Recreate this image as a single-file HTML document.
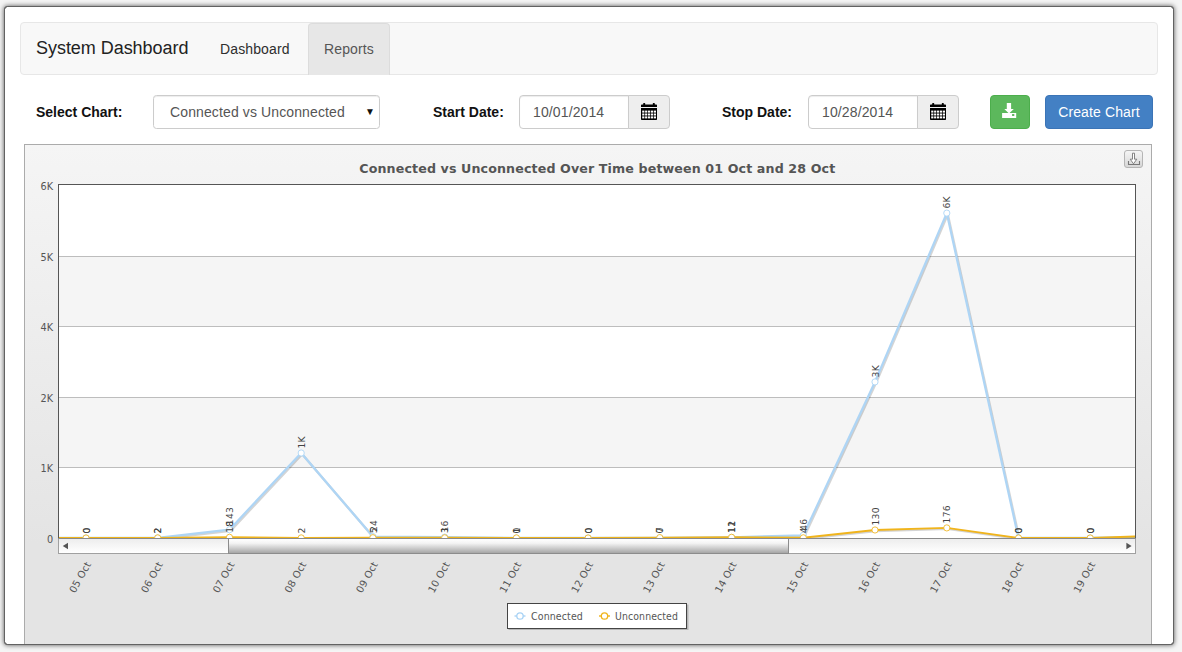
<!DOCTYPE html>
<html lang="en">
<head>
<meta charset="utf-8">
<title>System Dashboard</title>
<style>
html,body{margin:0;padding:0;}
body{width:1182px;height:652px;overflow:hidden;background:#f5f5f5;font-family:"Liberation Sans",Arial,Helvetica,sans-serif;font-size:14px;color:#333;position:relative;letter-spacing:.12px;}
.win{position:absolute;left:4px;top:6px;width:1168px;height:637px;border:1px solid #626262;border-radius:3.5px;background:#fff;box-shadow:0 0 5px 0 rgba(0,0,0,.68);overflow:hidden;}
.abs{position:absolute;white-space:nowrap;}
.navbar{left:20px;top:22px;width:1136px;height:51px;border:1px solid #e7e7e7;border-radius:4px;background:#f8f8f8;}
.brand{left:36px;top:38px;font-size:18px;letter-spacing:-.04px;line-height:20px;color:#222;}
.nav1{left:220px;top:39px;line-height:20px;color:#2e2e2e;}
.tab{left:308px;top:23px;width:80px;height:51px;border:1px solid #dcdcdc;border-bottom:none;border-radius:4px 4px 0 0;background:#e7e7e7;}
.nav2{left:324px;top:39px;line-height:20px;color:#555;}
.lbl{font-weight:bold;letter-spacing:0;line-height:20px;top:102px;color:#111;}
.ctl{top:95px;height:32px;border:1px solid #ccc;border-radius:3.5px;background:#fff;box-shadow:inset 0 1px 1px rgba(0,0,0,.075);color:#555;line-height:32px;}
.ctl.in{border-radius:4px 0 0 4px;}
.addon{top:95px;height:32px;width:40px;border:1px solid #ccc;border-radius:0 4px 4px 0;background:#eee;}
.cal{position:absolute;left:12px;top:7px;}
.btn{top:95px;height:32px;border-radius:4px;color:#fff;line-height:32px;text-align:center;}
.g{left:990px;width:38px;background:#5cb85c;border:1px solid #4cae4c;}
.b{left:1045px;width:106px;background:#4380c4;border:1px solid #3b74b6;}
.chartbox{left:24px;top:144px;width:1126px;height:499px;border:1px solid #ababab;border-bottom:none;overflow:hidden;background:linear-gradient(#f5f5f5,#e4e4e4 400px,#e4e4e4);}
.chart{position:absolute;left:0;top:0;font-family:"DejaVu Sans",Verdana,sans-serif;}
.chart .ax{font-size:9.7px;fill:#555;}
.chart .vl{font-size:9.2px;letter-spacing:.25px;fill:#444;}
.chart .title{font-size:13px;font-weight:bold;fill:#555;}
</style>
</head>
<body>
<div class="win"></div>
<div class="abs navbar"></div>
<div class="abs brand">System Dashboard</div>
<div class="abs nav1">Dashboard</div>
<div class="abs tab"></div>
<div class="abs nav2">Reports</div>

<div class="abs lbl" style="left:36px">Select Chart:</div>
<div class="abs ctl" style="left:153px;width:225px;"><span class="abs" style="left:16px;top:0">Connected vs Unconnected</span><span class="abs" style="left:211px;top:0;font-size:10px;color:#111">&#9660;</span></div>
<div class="abs lbl" style="left:433px">Start Date:</div>
<div class="abs ctl in" style="left:519px;width:108px;"><span class="abs" style="left:13px;top:0">10/01/2014</span></div>
<div class="abs addon" style="left:628px"><svg class="cal" width="16" height="17" viewBox="0 0 16 17"><path fill="#000" d="M0 2.3 Q0 1.5 .8 1.5 H2.2 V.6 Q2.2 0 2.8 0 H3.6 Q4.2 0 4.2 .6 V1.5 H11.8 V.6 Q11.8 0 12.4 0 H13.2 Q13.8 0 13.8 .6 V1.5 H15.2 Q16 1.5 16 2.3 V4 H0 Z"/><path fill="#000" d="M0 5 H16 V16.2 Q16 17 15.2 17 H.8 Q0 17 0 16.2 Z"/><g fill="#fff"><rect x="1.2" y="7.6" width="2.2" height="2"/><rect x="4.1" y="7.6" width="2.2" height="2"/><rect x="7" y="7.6" width="2.2" height="2"/><rect x="9.9" y="7.6" width="2.2" height="2"/><rect x="12.8" y="7.6" width="2.2" height="2"/><rect x="1.2" y="10.5" width="2.2" height="2"/><rect x="4.1" y="10.5" width="2.2" height="2"/><rect x="7" y="10.5" width="2.2" height="2"/><rect x="9.9" y="10.5" width="2.2" height="2"/><rect x="12.8" y="10.5" width="2.2" height="2"/><rect x="1.2" y="13.4" width="2.2" height="2"/><rect x="4.1" y="13.4" width="2.2" height="2"/><rect x="7" y="13.4" width="2.2" height="2"/><rect x="9.9" y="13.4" width="2.2" height="2"/><rect x="12.8" y="13.4" width="2.2" height="2"/></g></svg></div>
<div class="abs lbl" style="left:722px">Stop Date:</div>
<div class="abs ctl in" style="left:808px;width:108px;"><span class="abs" style="left:13px;top:0">10/28/2014</span></div>
<div class="abs addon" style="left:917px"><svg class="cal" width="16" height="17" viewBox="0 0 16 17"><path fill="#000" d="M0 2.3 Q0 1.5 .8 1.5 H2.2 V.6 Q2.2 0 2.8 0 H3.6 Q4.2 0 4.2 .6 V1.5 H11.8 V.6 Q11.8 0 12.4 0 H13.2 Q13.8 0 13.8 .6 V1.5 H15.2 Q16 1.5 16 2.3 V4 H0 Z"/><path fill="#000" d="M0 5 H16 V16.2 Q16 17 15.2 17 H.8 Q0 17 0 16.2 Z"/><g fill="#fff"><rect x="1.2" y="7.6" width="2.2" height="2"/><rect x="4.1" y="7.6" width="2.2" height="2"/><rect x="7" y="7.6" width="2.2" height="2"/><rect x="9.9" y="7.6" width="2.2" height="2"/><rect x="12.8" y="7.6" width="2.2" height="2"/><rect x="1.2" y="10.5" width="2.2" height="2"/><rect x="4.1" y="10.5" width="2.2" height="2"/><rect x="7" y="10.5" width="2.2" height="2"/><rect x="9.9" y="10.5" width="2.2" height="2"/><rect x="12.8" y="10.5" width="2.2" height="2"/><rect x="1.2" y="13.4" width="2.2" height="2"/><rect x="4.1" y="13.4" width="2.2" height="2"/><rect x="7" y="13.4" width="2.2" height="2"/><rect x="9.9" y="13.4" width="2.2" height="2"/><rect x="12.8" y="13.4" width="2.2" height="2"/></g></svg></div>
<div class="abs btn g"><svg width="38" height="32" viewBox="0 0 38 32" style="position:absolute;left:0;top:0"><path fill="#fff" d="M15.8 7.1 H20.1 V13.1 H22.8 L18 17.5 L13.3 13.1 H15.8 Z"/><path fill="#fff" fill-rule="evenodd" d="M11.1 17.1 H25.2 V21.9 H11.1 Z M21.1 18.1 V20 H23.3 V18.1 Z"/></svg></div>
<div class="abs btn b">Create Chart</div>

<div class="abs chartbox">
<svg class="chart" width="1126" height="520" viewBox="0 0 1126 520">
<defs><clipPath id="plotclip"><rect x="34" y="40" width="1076" height="353"/></clipPath><linearGradient id="thumbg" x1="0" y1="0" x2="0" y2="1"><stop offset="0" stop-color="#ffffff"/><stop offset="0.3" stop-color="#f4f4f4"/><stop offset="1" stop-color="#a6a6a6"/></linearGradient><linearGradient id="trackg" x1="0" y1="0" x2="0" y2="1"><stop offset="0" stop-color="#ececec"/><stop offset="1" stop-color="#ffffff"/></linearGradient><linearGradient id="expg" x1="0" y1="0" x2="0" y2="1"><stop offset="0" stop-color="#f6f6f6"/><stop offset="1" stop-color="#d6d6d6"/></linearGradient></defs>
<rect x="34" y="40" width="1076" height="353" fill="#ffffff"/>
<rect x="34" y="112" width="1076" height="69" fill="#f5f5f5"/>
<rect x="34" y="253" width="1076" height="69" fill="#f5f5f5"/>
<rect x="34" y="111" width="1076" height="1" fill="#bdbdbd"/>
<rect x="34" y="181" width="1076" height="1" fill="#bdbdbd"/>
<rect x="34" y="252" width="1076" height="1" fill="#bdbdbd"/>
<rect x="34" y="322" width="1076" height="1" fill="#bdbdbd"/>
<text x="28.3" y="45.0" text-anchor="end" class="ax">6K</text>
<text x="28.3" y="116.0" text-anchor="end" class="ax">5K</text>
<text x="28.3" y="186.0" text-anchor="end" class="ax">4K</text>
<text x="28.3" y="257.0" text-anchor="end" class="ax">2K</text>
<text x="28.3" y="327.0" text-anchor="end" class="ax">1K</text>
<text x="28.3" y="398.0" text-anchor="end" class="ax">0</text>
<text x="572.3" y="28.0" text-anchor="middle" textLength="476" lengthAdjust="spacingAndGlyphs" class="title">Connected vs Unconnected Over Time between 01 Oct and 28 Oct</text>
<g clip-path="url(#plotclip)">
<polyline points="-9.7,394.2 62.0,394.2 133.7,394.1 205.5,385.9 277.2,309.2 348.9,392.8 420.7,393.3 492.4,394.2 564.1,394.2 635.8,394.2 707.6,393.6 779.3,391.5 851.0,238.1 922.8,69.3 994.5,394.2 1066.2,394.2 1138.0,393.0" fill="none" stroke="#000" stroke-opacity="0.17" stroke-width="2.3" stroke-linejoin="round"/>
<polyline points="-10.7,393.0 61.0,393.0 132.7,392.9 204.5,384.7 276.2,308.0 347.9,391.6 419.7,392.1 491.4,393.0 563.1,393.0 634.8,393.0 706.6,392.4 778.3,390.3 850.0,236.9 921.8,68.1 993.5,393.0 1065.2,393.0 1137.0,391.8" fill="none" stroke="#aed5f5" stroke-width="2.3" stroke-linejoin="round"/>
<polyline points="-9.7,394.2 62.0,394.2 133.7,394.1 205.5,393.5 277.2,394.1 348.9,393.9 420.7,394.0 492.4,394.1 564.1,394.2 635.8,393.8 707.6,393.5 779.3,394.0 851.0,386.2 922.8,384.1 994.5,394.2 1066.2,394.2 1138.0,391.9" fill="none" stroke="#000" stroke-opacity="0.17" stroke-width="1.9" stroke-linejoin="round"/>
<polyline points="-10.7,393.0 61.0,393.0 132.7,392.9 204.5,392.3 276.2,392.9 347.9,392.7 419.7,392.8 491.4,392.9 563.1,393.0 634.8,392.6 706.6,392.3 778.3,392.8 850.0,385.0 921.8,382.9 993.5,393.0 1065.2,393.0 1137.0,390.7" fill="none" stroke="#f0b41c" stroke-width="1.9" stroke-linejoin="round"/>
<circle cx="-10.7" cy="393.0" r="3.1" fill="#fff" stroke="#a9d3f5" stroke-width="1" stroke-opacity="0.85"/>
<circle cx="61.0" cy="393.0" r="3.1" fill="#fff" stroke="#a9d3f5" stroke-width="1" stroke-opacity="0.85"/>
<circle cx="132.7" cy="392.9" r="3.1" fill="#fff" stroke="#a9d3f5" stroke-width="1" stroke-opacity="0.85"/>
<circle cx="204.5" cy="384.7" r="3.1" fill="#fff" stroke="#a9d3f5" stroke-width="1" stroke-opacity="0.85"/>
<circle cx="276.2" cy="308.0" r="3.1" fill="#fff" stroke="#a9d3f5" stroke-width="1" stroke-opacity="0.85"/>
<circle cx="347.9" cy="391.6" r="3.1" fill="#fff" stroke="#a9d3f5" stroke-width="1" stroke-opacity="0.85"/>
<circle cx="419.7" cy="392.1" r="3.1" fill="#fff" stroke="#a9d3f5" stroke-width="1" stroke-opacity="0.85"/>
<circle cx="491.4" cy="393.0" r="3.1" fill="#fff" stroke="#a9d3f5" stroke-width="1" stroke-opacity="0.85"/>
<circle cx="563.1" cy="393.0" r="3.1" fill="#fff" stroke="#a9d3f5" stroke-width="1" stroke-opacity="0.85"/>
<circle cx="634.8" cy="393.0" r="3.1" fill="#fff" stroke="#a9d3f5" stroke-width="1" stroke-opacity="0.85"/>
<circle cx="706.6" cy="392.4" r="3.1" fill="#fff" stroke="#a9d3f5" stroke-width="1" stroke-opacity="0.85"/>
<circle cx="778.3" cy="390.3" r="3.1" fill="#fff" stroke="#a9d3f5" stroke-width="1" stroke-opacity="0.85"/>
<circle cx="850.0" cy="236.9" r="3.1" fill="#fff" stroke="#a9d3f5" stroke-width="1" stroke-opacity="0.85"/>
<circle cx="921.8" cy="68.1" r="3.1" fill="#fff" stroke="#a9d3f5" stroke-width="1" stroke-opacity="0.85"/>
<circle cx="993.5" cy="393.0" r="3.1" fill="#fff" stroke="#a9d3f5" stroke-width="1" stroke-opacity="0.85"/>
<circle cx="1065.2" cy="393.0" r="3.1" fill="#fff" stroke="#a9d3f5" stroke-width="1" stroke-opacity="0.85"/>
<circle cx="1137.0" cy="391.8" r="3.1" fill="#fff" stroke="#a9d3f5" stroke-width="1" stroke-opacity="0.85"/>
<circle cx="-10.7" cy="393.0" r="3.1" fill="#fff" stroke="#f0b41c" stroke-width="1" stroke-opacity="0.85"/>
<circle cx="61.0" cy="393.0" r="3.1" fill="#fff" stroke="#f0b41c" stroke-width="1" stroke-opacity="0.85"/>
<circle cx="132.7" cy="392.9" r="3.1" fill="#fff" stroke="#f0b41c" stroke-width="1" stroke-opacity="0.85"/>
<circle cx="204.5" cy="392.3" r="3.1" fill="#fff" stroke="#f0b41c" stroke-width="1" stroke-opacity="0.85"/>
<circle cx="276.2" cy="392.9" r="3.1" fill="#fff" stroke="#f0b41c" stroke-width="1" stroke-opacity="0.85"/>
<circle cx="347.9" cy="392.7" r="3.1" fill="#fff" stroke="#f0b41c" stroke-width="1" stroke-opacity="0.85"/>
<circle cx="419.7" cy="392.8" r="3.1" fill="#fff" stroke="#f0b41c" stroke-width="1" stroke-opacity="0.85"/>
<circle cx="491.4" cy="392.9" r="3.1" fill="#fff" stroke="#f0b41c" stroke-width="1" stroke-opacity="0.85"/>
<circle cx="563.1" cy="393.0" r="3.1" fill="#fff" stroke="#f0b41c" stroke-width="1" stroke-opacity="0.85"/>
<circle cx="634.8" cy="392.6" r="3.1" fill="#fff" stroke="#f0b41c" stroke-width="1" stroke-opacity="0.85"/>
<circle cx="706.6" cy="392.3" r="3.1" fill="#fff" stroke="#f0b41c" stroke-width="1" stroke-opacity="0.85"/>
<circle cx="778.3" cy="392.8" r="3.1" fill="#fff" stroke="#f0b41c" stroke-width="1" stroke-opacity="0.85"/>
<circle cx="850.0" cy="385.0" r="3.1" fill="#fff" stroke="#f0b41c" stroke-width="1" stroke-opacity="0.85"/>
<circle cx="921.8" cy="382.9" r="3.1" fill="#fff" stroke="#f0b41c" stroke-width="1" stroke-opacity="0.85"/>
<circle cx="993.5" cy="393.0" r="3.1" fill="#fff" stroke="#f0b41c" stroke-width="1" stroke-opacity="0.85"/>
<circle cx="1065.2" cy="393.0" r="3.1" fill="#fff" stroke="#f0b41c" stroke-width="1" stroke-opacity="0.85"/>
<circle cx="1137.0" cy="390.7" r="3.1" fill="#fff" stroke="#f0b41c" stroke-width="1" stroke-opacity="0.85"/>
</g>
<text transform="translate(64.6,388.5) rotate(-90)" class="vl">0</text>
<text transform="translate(136.3,388.4) rotate(-90)" class="vl">2</text>
<text transform="translate(208.1,380.2) rotate(-90)" class="vl">143</text>
<text transform="translate(279.8,303.5) rotate(-90)" class="vl">1K</text>
<text transform="translate(351.5,387.1) rotate(-90)" class="vl">24</text>
<text transform="translate(423.3,387.6) rotate(-90)" class="vl">16</text>
<text transform="translate(495.0,388.5) rotate(-90)" class="vl">0</text>
<text transform="translate(566.7,388.5) rotate(-90)" class="vl">0</text>
<text transform="translate(638.4,388.5) rotate(-90)" class="vl">0</text>
<text transform="translate(710.2,387.9) rotate(-90)" class="vl">11</text>
<text transform="translate(781.9,385.8) rotate(-90)" class="vl">46</text>
<text transform="translate(853.6,232.4) rotate(-90)" class="vl">3K</text>
<text transform="translate(925.4,63.6) rotate(-90)" class="vl">6K</text>
<text transform="translate(997.1,388.5) rotate(-90)" class="vl">0</text>
<text transform="translate(1068.8,388.5) rotate(-90)" class="vl">0</text>
<text transform="translate(64.6,388.5) rotate(-90)" class="vl">0</text>
<text transform="translate(136.3,388.4) rotate(-90)" class="vl">2</text>
<text transform="translate(208.1,387.8) rotate(-90)" class="vl">18</text>
<text transform="translate(279.8,388.4) rotate(-90)" class="vl">2</text>
<text transform="translate(351.5,388.2) rotate(-90)" class="vl">5</text>
<text transform="translate(423.3,388.3) rotate(-90)" class="vl">3</text>
<text transform="translate(495.0,388.4) rotate(-90)" class="vl">1</text>
<text transform="translate(566.7,388.5) rotate(-90)" class="vl">0</text>
<text transform="translate(638.4,388.1) rotate(-90)" class="vl">7</text>
<text transform="translate(710.2,387.8) rotate(-90)" class="vl">12</text>
<text transform="translate(781.9,388.3) rotate(-90)" class="vl">4</text>
<text transform="translate(853.6,380.5) rotate(-90)" class="vl">130</text>
<text transform="translate(925.4,378.4) rotate(-90)" class="vl">176</text>
<text transform="translate(997.1,388.5) rotate(-90)" class="vl">0</text>
<text transform="translate(1068.8,388.5) rotate(-90)" class="vl">0</text>
<rect x="33" y="39" width="1" height="354" fill="#555"/>
<rect x="33" y="39" width="1078" height="1" fill="#555"/>
<rect x="1110" y="39" width="1" height="354" fill="#555"/>
<rect x="34" y="393" width="1076" height="15" fill="url(#trackg)"/>
<rect x="33" y="393" width="1" height="16" fill="#a0a0a0"/>
<rect x="1110" y="393" width="1" height="16" fill="#a0a0a0"/>
<rect x="33" y="408" width="1078" height="1" fill="#a0a0a0"/>
<rect x="33" y="393" width="1078" height="1" fill="#8a8a8a"/>
<rect x="203" y="394" width="561" height="14" fill="url(#thumbg)"/>
<rect x="203" y="394" width="1" height="14" fill="#8c8c8c"/>
<rect x="763" y="394" width="1" height="14" fill="#8c8c8c"/>
<rect x="203" y="408" width="561" height="1" fill="#8c8c8c"/>
<path d="M37.8 401.0 l5.2 -3.2 v6.4 z" fill="#555"/>
<path d="M1106.6 401.0 l-5.2 -3.2 v6.4 z" fill="#555"/>
<text transform="translate(66.4,419.1) rotate(-61)" text-anchor="end" class="ax" style="font-size:10px">05 Oct</text>
<text transform="translate(138.1,419.1) rotate(-61)" text-anchor="end" class="ax" style="font-size:10px">06 Oct</text>
<text transform="translate(209.9,419.1) rotate(-61)" text-anchor="end" class="ax" style="font-size:10px">07 Oct</text>
<text transform="translate(281.6,419.1) rotate(-61)" text-anchor="end" class="ax" style="font-size:10px">08 Oct</text>
<text transform="translate(353.3,419.1) rotate(-61)" text-anchor="end" class="ax" style="font-size:10px">09 Oct</text>
<text transform="translate(425.1,419.1) rotate(-61)" text-anchor="end" class="ax" style="font-size:10px">10 Oct</text>
<text transform="translate(496.8,419.1) rotate(-61)" text-anchor="end" class="ax" style="font-size:10px">11 Oct</text>
<text transform="translate(568.5,419.1) rotate(-61)" text-anchor="end" class="ax" style="font-size:10px">12 Oct</text>
<text transform="translate(640.2,419.1) rotate(-61)" text-anchor="end" class="ax" style="font-size:10px">13 Oct</text>
<text transform="translate(712.0,419.1) rotate(-61)" text-anchor="end" class="ax" style="font-size:10px">14 Oct</text>
<text transform="translate(783.7,419.1) rotate(-61)" text-anchor="end" class="ax" style="font-size:10px">15 Oct</text>
<text transform="translate(855.4,419.1) rotate(-61)" text-anchor="end" class="ax" style="font-size:10px">16 Oct</text>
<text transform="translate(927.2,419.1) rotate(-61)" text-anchor="end" class="ax" style="font-size:10px">17 Oct</text>
<text transform="translate(998.9,419.1) rotate(-61)" text-anchor="end" class="ax" style="font-size:10px">18 Oct</text>
<text transform="translate(1070.6,419.1) rotate(-61)" text-anchor="end" class="ax" style="font-size:10px">19 Oct</text>
<rect x="483.5" y="459.5" width="180" height="25.5" fill="#000" fill-opacity="0.2"/>
<rect x="482.5" y="458.5" width="179" height="25" fill="#fff" stroke="#444" stroke-width="1"/>
<path d="M489.5 471.0 h11" stroke="#a9d3f5" stroke-width="1.4"/>
<circle cx="495.0" cy="471.0" r="3.2" fill="#fff" stroke="#a9d3f5" stroke-width="1.3"/>
<text x="506.0" y="474.7" class="ax" textLength="52" lengthAdjust="spacingAndGlyphs">Connected</text>
<path d="M574.0 471.0 h11" stroke="#f0b41c" stroke-width="1.4"/>
<circle cx="579.5" cy="471.0" r="3.2" fill="#fff" stroke="#f0b41c" stroke-width="1.3"/>
<text x="590.0" y="474.7" class="ax" textLength="63" lengthAdjust="spacingAndGlyphs">Unconnected</text>
<rect x="1099.5" y="5.5" width="18" height="17" rx="2.5" fill="url(#expg)" stroke="#b5b5b5"/>
<path d="M1103.5 16.0 v3.5 h11 v-3.5" fill="none" stroke="#777" stroke-width="1.1"/>
<path d="M1107.5 8.2 h2 v6 h2.3 l-3.3 4.6 l-3.3 -4.6 h2.3 z" fill="#fff" stroke="#777" stroke-width="0.9" stroke-linejoin="round"/>
</svg>
</div>
<div class="abs" style="left:4px;top:6px;width:1168px;height:637px;border:1px solid #626262;border-radius:3.5px;pointer-events:none;"></div>
</body>
</html>
